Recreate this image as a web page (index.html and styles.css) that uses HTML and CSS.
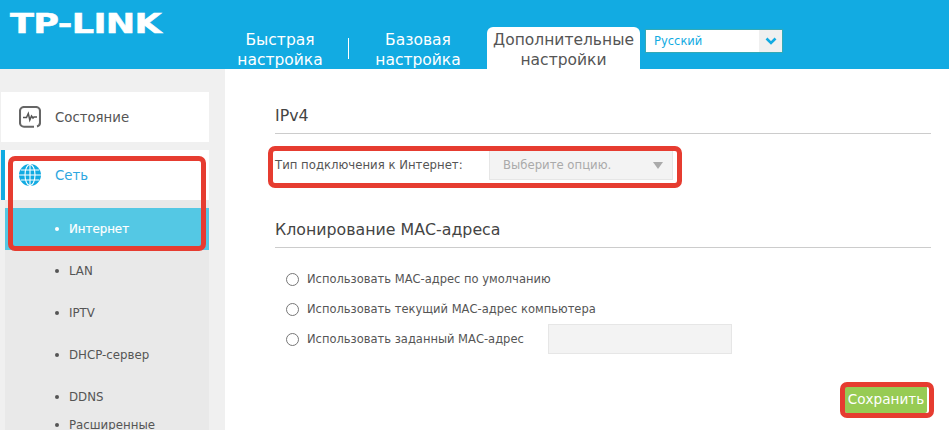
FILE: index.html
```html
<!DOCTYPE html>
<html lang="ru">
<head>
<meta charset="utf-8">
<title>TP-LINK</title>
<link rel="stylesheet" href="styles.css">
</head>
<body>
<header class="header">
  <div class="logo-box"><span class="logo">TP-LINK</span></div>
  <nav class="tabs">
    <a class="tab tab-quick">Быстрая<br>настройка</a>
    <span class="tab-sep"></span>
    <a class="tab tab-basic">Базовая<br>настройка</a>
    <a class="tab tab-active">Дополнительные<br>настройки</a>
  </nav>
  <div class="lang">
    <span class="lang-text">Русский</span>
    <span class="lang-arrow">
      <svg width="12" height="8" viewBox="0 0 12 8"><path d="M1.5 1.5 6 6l4.500-4.500" fill="none" stroke="#12abe2" stroke-width="2.600"/></svg>
    </span>
  </div>
</header>
<div class="main">
  <aside class="sidebar">
    <div class="menu-item">
      <svg class="menu-icon" width="22" height="22" viewBox="0 0 22 22"><path d="M15 20.700H5a4 4 0 0 1-4-4V5a4 4 0 0 1 4-4h12a4 4 0 0 1 4 4v11.500a4 4 0 0 1-3 4" fill="none" stroke="#666" stroke-width="2.100"/><path d="M4 11.500h3.500l1.800-4 1.500 6.500 1.700-4 1.500 2 1-1h3" fill="none" stroke="#555" stroke-width="1.500"/></svg>
      <span>Состояние</span>
    </div>
    <div class="menu-item menu-active">
      <svg class="menu-icon" width="22" height="22" viewBox="0 0 22 22"><circle cx="11" cy="11" r="11" fill="#12abe2"/><g fill="none" stroke="#fff" stroke-width="1.100"><ellipse cx="11" cy="11" rx="5" ry="10.500"/><path d="M11 0v22M0 11h22M1.800 6h18.400M1.800 16h18.400"/></g></svg>
      <span>Сеть</span>
    </div>
    <ul class="submenu">
      <li class="sub-current">Интернет</li>
      <li>LAN</li>
      <li>IPTV</li>
      <li>DHCP-сервер</li>
      <li class="sub-tight">DDNS</li>
      <li>Расширенные</li>
    </ul>
  </aside>
  <main class="content">
    <h2 class="section-title">IPv4</h2>
    <div class="conn-row">
      <span class="conn-label">Тип подключения к Интернет:</span>
      <div class="conn-select"><span>Выберите опцию.</span><i class="conn-caret"></i></div>
    </div>
    <h2 class="section-title second">Клонирование МАС-адреса</h2>
    <div class="radios">
      <label class="radio-row"><i class="radio"></i>Использовать МАС-адрес по умолчанию</label>
      <label class="radio-row"><i class="radio"></i>Использовать текущий МАС-адрес компьютера</label>
      <label class="radio-row"><i class="radio"></i><span class="radio-fixed">Использовать заданный МАС-адрес</span><span class="mac-input"></span></label>
    </div>
    <div class="actions"><button class="save">Сохранить</button></div>
  </main>
</div>
<div class="mark mark-side"></div>
<div class="mark mark-conn"></div>
<div class="mark mark-save"></div>
</body>
</html>
```

FILE: styles.css
```css
* { box-sizing: border-box; }
html, body { margin: 0; height: 100%; }
body {
  width: 949px;
  height: 430px;
  overflow: hidden;
  position: relative;
  background: #fff;
  font-family: "DejaVu Sans", sans-serif;
  color: #555;
}
.header {
  height: 69px;
  background: #12abe2;
  display: flex;
  align-items: flex-start;
}
.logo-box { width: 225px; padding: 7px 0 0 10px; }
.logo {
  display: block;
  width: 100px;
  color: #fff;
  font: 900 27px/34px "DejaVu Sans", sans-serif;
  letter-spacing: -0.5px;
  -webkit-text-stroke: 0.5px #fff;
  transform-origin: left top;
  transform: scaleX(1.3);
  white-space: nowrap;
}
.tabs { display: flex; align-items: flex-start; padding-top: 27px; }
.tab {
  display: block;
  color: #fff;
  font-size: 15.500px;
  line-height: 20px;
  text-align: center;
  height: 42px;
  padding-top: 3px;
}
.tab-quick { width: 110px; margin-right: 13px; }
.tab-sep { width: 1px; height: 21px; background: #fff; margin-top: 11px; }
.tab-basic { width: 138px; }
.tab-active {
  width: 153px;
  background: #fff;
  color: #555;
  border-radius: 6px 6px 0 0;
}
.lang {
  width: 138px;
  height: 24px;
  margin: 29px 0 0 5px;
  background: #fff;
  display: flex;
  justify-content: space-between;
  box-shadow: 0 0 0 1px #33a9b5 inset;
  padding: 1px;
}
.lang-text { color: #12abe2; font-size: 11.500px; line-height: 22px; padding-left: 8px; }
.lang-arrow { width: 23px; background: #f0f0f0; display: flex; align-items: center; justify-content: center; }
.main { display: flex; height: 361px; }
.sidebar { width: 225px; background: #f0f0f0; padding: 23px 16px 0 1px; overflow: hidden; flex: none; }
.menu-item {
  height: 50px;
  background: #fff;
  display: flex;
  align-items: center;
  padding-left: 18px;
  font-size: 13.300px;
  color: #555;
  margin-bottom: 8px;
}
.menu-icon { margin-right: 14px; flex: none; }
.menu-active { margin-bottom: 0; color: #2ea7e0; border-left: 4px solid #12abe2; padding-left: 14px; }
.submenu {
  margin: 0 0 0 4px;
  padding: 8px 0 0;
  list-style: none;
  background: #e9e9e9;
  font-size: 11.800px;
  color: #555;
}
.submenu li {
  height: 42px;
  line-height: 42px;
  padding-left: 64px;
  position: relative;
}
.submenu li::before {
  content: "";
  position: absolute;
  left: 50px;
  top: 19px;
  width: 4px;
  height: 4px;
  border-radius: 50%;
  background: #555;
}
.submenu .sub-current { background: #54c8e4; color: #fff; -webkit-text-stroke: 0.2px #fff; }
.submenu .sub-current::before { background: #fff; }
.submenu .sub-tight { height: 28px; }
.content { flex: 1; padding: 0 18px 0 50px; }
.section-title {
  margin: 0;
  font-weight: 400;
  font-size: 15.800px;
  line-height: 24px;
  color: #444;
  padding: 35px 0 5px;
  border-bottom: 1px solid #ccc;
  height: 65px;
}
.section-title.second { height: 52px; padding: 22px 0 5px; }
.conn-row { display: flex; align-items: center; height: 62px; }
.conn-label { width: 214px; font-size: 11.700px; color: #555; }
.conn-select {
  width: 184px;
  height: 30px;
  background: #f3f3f3;
  border: 1px solid #e6e6e6;
  display: flex;
  align-items: center;
  justify-content: space-between;
  padding: 0 9px 0 13px;
  font-size: 11.700px;
  color: #aaa;
}
.conn-caret {
  width: 0;
  height: 0;
  border-left: 5px solid transparent;
  border-right: 5px solid transparent;
  border-top: 7px solid #aaa;
}
.radios { padding: 16px 0 0 11px; }
.radio-row { display: flex; align-items: center; height: 30px; font-size: 11.500px; color: #555; }
.radio { width: 13px; height: 13px; border: 1px solid #777; border-radius: 50%; margin-right: 8px; background: #fff; flex: none; }
.radio-fixed { width: 241px; }
.mac-input { width: 184px; height: 30px; background: #f3f3f3; border: 1px solid #e6e6e6; }
.actions { display: flex; justify-content: flex-end; padding: 31px 4px 0 0; }
.save {
  width: 82px;
  height: 28px;
  border: 0;
  border-radius: 2px;
  padding: 0;
  background: #97cb54;
  color: #fff;
  font: 13.600px "DejaVu Sans", sans-serif;
}
.mark { position: absolute; border: 5px solid #e63c30; border-radius: 7px; pointer-events: none; }
.mark-side { left: 8px; top: 156px; width: 198px; height: 95px; }
.mark-conn { left: 268px; top: 146px; width: 414px; height: 42px; }
.mark-save { left: 840px; top: 382px; width: 94px; height: 36px; }
```
